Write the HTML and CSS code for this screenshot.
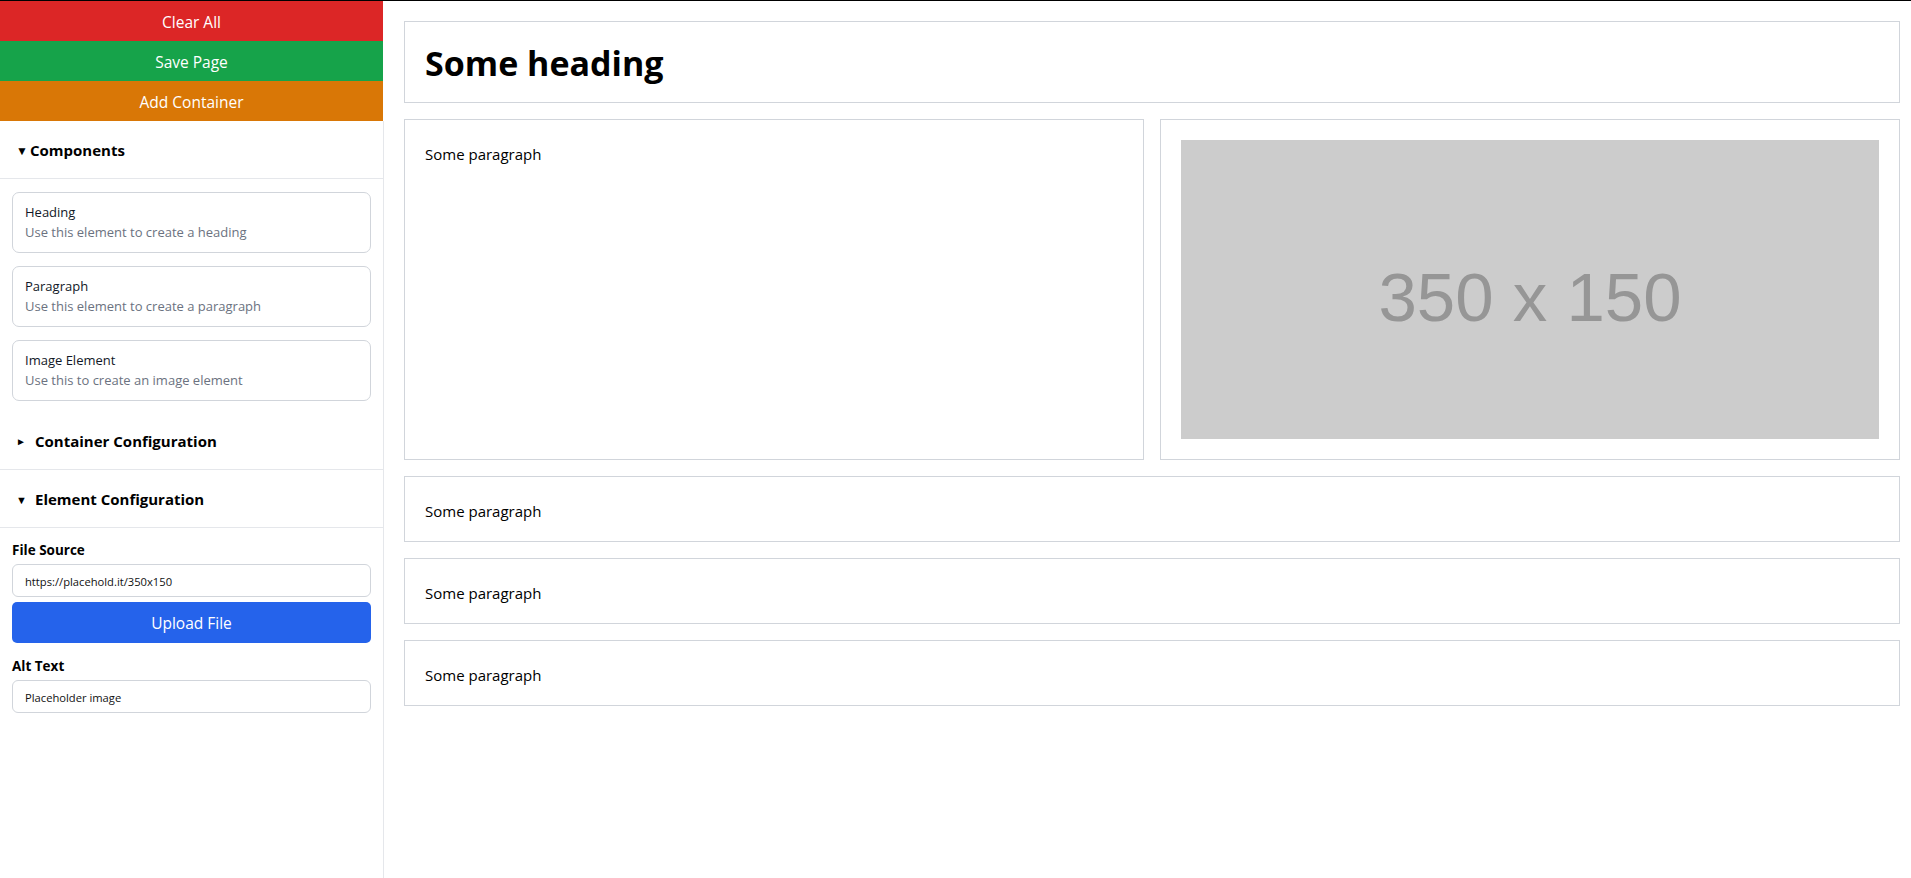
FILE: index.html
```html
<!DOCTYPE html>
<html lang="en">
<head>
<meta charset="utf-8">
<title>Page Builder</title>
<link rel="stylesheet" href="styles.css">
</head>
<body>
<div class="app">
  <aside class="sidebar">
    <div class="actions">
      <button class="action action-red">Clear All</button>
      <button class="action action-green">Save Page</button>
      <button class="action action-orange">Add Container</button>
    </div>
    <div class="panel">
      <section class="section">
        <div class="summary"><span class="marker marker-down-a">▼</span><span class="summary-text">Components</span></div>
        <div class="components">
          <div class="comp-card">
            <div class="comp-title">Heading</div>
            <div class="comp-desc">Use this element to create a heading</div>
          </div>
          <div class="comp-card">
            <div class="comp-title">Paragraph</div>
            <div class="comp-desc">Use this element to create a paragraph</div>
          </div>
          <div class="comp-card">
            <div class="comp-title">Image Element</div>
            <div class="comp-desc">Use this to create an image element</div>
          </div>
        </div>
      </section>
      <section class="section">
        <div class="summary"><span class="marker marker-right">►</span><span class="summary-text">Container Configuration</span></div>
      </section>
      <section class="section">
        <div class="summary"><span class="marker">▼</span><span class="summary-text">Element Configuration</span></div>
        <div class="config">
          <label class="field-label">File Source</label>
          <input class="field-input" type="text" value="https://placehold.it/350x150">
          <button class="upload">Upload File</button>
          <label class="field-label field-label-gap">Alt Text</label>
          <input class="field-input" type="text" value="Placeholder image">
        </div>
      </section>
    </div>
  </aside>
  <main class="canvas">
    <div class="block block-heading">
      <h1 class="heading">Some heading</h1>
    </div>
    <div class="row">
      <div class="block block-text">
        <p class="para">Some paragraph</p>
      </div>
      <div class="block">
        <svg class="placeholder" viewBox="0 0 350 150" preserveAspectRatio="none">
          <rect width="350" height="150" fill="#cccccc"/>
          <text x="175" y="91" text-anchor="middle" font-family="Liberation Sans, Arial, sans-serif" font-size="34.6" fill="#969696">350 x 150</text>
        </svg>
      </div>
    </div>
    <div class="block block-text">
      <p class="para">Some paragraph</p>
    </div>
    <div class="block block-text">
      <p class="para">Some paragraph</p>
    </div>
    <div class="block block-text">
      <p class="para">Some paragraph</p>
    </div>
  </main>
</div>
</body>
</html>
```
FILE: styles.css
```css
* { box-sizing: border-box; }

html, body {
  margin: 0;
  padding: 0;
}

body {
  border-top: 1px solid #000;
  font-family: "Open Sans", "Noto Sans", sans-serif;
  color: #000;
  background: #fff;
}

.app {
  display: flex;
  min-height: calc(100vh - 1px);
}

.sidebar {
  width: 384px;
  flex: none;
  display: flex;
  flex-direction: column;
}

.actions {
  display: flex;
  flex-direction: column;
  width: 383px;
}

.action {
  border: 0;
  margin: 0;
  height: 40px;
  padding: 2px 0 0;
  color: #fff;
  font-family: inherit;
  font-size: 15.5px;
  cursor: pointer;
}

.action-red { background: #dc2626; }
.action-green { background: #16a34a; }
.action-orange { background: #d97706; }

.panel {
  flex: 1;
  border-right: 1px solid #e5e7eb;
}

.summary {
  display: flex;
  align-items: center;
  height: 58px;
  padding: 1px 16px 0;
  border-bottom: 1px solid #e5e7eb;
  font-weight: 700;
  font-size: 15px;
}

.marker {
  font-size: 11px;
  width: 19px;
  flex: none;
}

.marker-down-a { width: 14px; font-size: 12px; }
.marker-right { font-size: 10px; }

.components {
  display: flex;
  flex-direction: column;
  gap: 13px;
  padding: 13px 12px 11px;
}

.comp-card {
  border: 1px solid #d1d5db;
  border-radius: 7px;
  padding: 9px 12px 10px;
  font-size: 13px;
  line-height: 20px;
}

.comp-title { color: #111827; }
.comp-desc { color: #6b7280; }

.config {
  display: flex;
  flex-direction: column;
  padding: 12px 12px;
}

.field-label {
  font-size: 13.5px;
  font-weight: 700;
  line-height: 20px;
}

.field-label-gap { margin-top: 13px; }

.field-input {
  margin-top: 4px;
  height: 33px;
  border: 1px solid #d1d5db;
  border-radius: 6px;
  padding: 1px 12px 0;
  font-family: inherit;
  font-size: 11.2px;
  color: #111;
  background: #fff;
}

.upload {
  margin-top: 5px;
  height: 41px;
  border: 0;
  border-radius: 5px;
  padding-top: 1px;
  background: #2563eb;
  color: #fff;
  font-family: inherit;
  font-size: 15.5px;
}

.canvas {
  flex: 1;
  display: flex;
  flex-direction: column;
  gap: 16px;
  padding: 20px 11px 20px 20px;
}

.block {
  border: 1px solid #d1d5db;
  padding: 20px;
}

.block-heading {
  padding: 21px 20px 19px;
}

.block-text {
  padding: 22px 20px 18px;
}

.heading {
  margin: 0;
  font-size: 34px;
  line-height: 40px;
  font-weight: 700;
}

.para {
  margin: 0;
  font-size: 15px;
  line-height: 24px;
}

.row {
  display: grid;
  grid-template-columns: 1fr 1fr;
  gap: 16px;
}

.placeholder {
  display: block;
  width: 100%;
  aspect-ratio: 350 / 150;
}
```
